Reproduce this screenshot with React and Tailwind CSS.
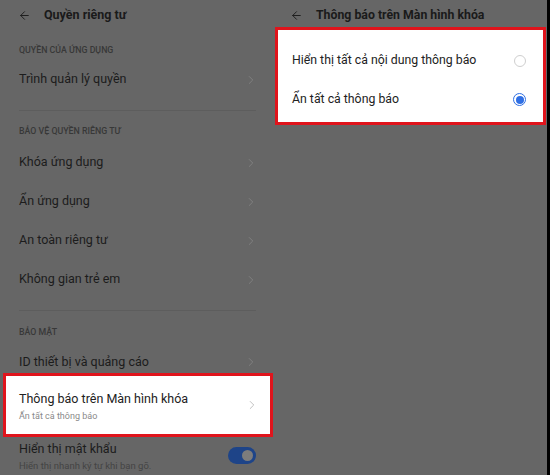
import { ArrowLeft, ChevronRight } from 'lucide-react';

// Màn hình cài đặt quyền riêng tư (ảnh chụp bị làm tối, chỉ vùng đánh dấu giữ màu trắng)

const font = { fontFamily: 'Roboto, "Noto Sans", sans-serif' };

const SectionLabel = ({ children, pt }) => (
    <div className={`${pt} pl-[19px] text-[8.8px] leading-[10px] font-medium text-[#383838]`}>
        {children}
    </div>
);

const DimRow = ({ children }) => (
    <div className="h-[39px] flex items-center justify-between pl-[19px] pr-[15px]">
        <span className="text-[12.5px] text-[#1c1c1c]">{children}</span>
        <ChevronRight className="w-[14px] h-[14px] text-[#828282]" strokeWidth={1.5} />
    </div>
);

const Divider = ({ mt }) => <div className={`${mt} ml-[19px] mr-[17px] h-px bg-[#5d5d5d]`} />;

const LeftPanel = () => (
    <div className="w-[273px] shrink-0">
        <div className="h-[30px] flex items-center pl-[18px] gap-[13px]">
            <ArrowLeft className="w-[13px] h-[13px] text-[#1c1c1c]" strokeWidth={1.75} />
            <span className="text-[12.5px] font-bold text-[#1a1a1a]">Quyền riêng tư</span>
        </div>

        <SectionLabel pt="pt-[15px]">QUYỀN CỦA ỨNG DỤNG</SectionLabel>
        <div className="mt-[5px]">
            <DimRow>Trình quản lý quyền</DimRow>
        </div>
        <Divider mt="mt-[11px]" />

        <SectionLabel pt="pt-[15px]">BẢO VỆ QUYỀN RIÊNG TƯ</SectionLabel>
        <div className="mt-[7px]">
            <DimRow>Khóa ứng dụng</DimRow>
            <DimRow>Ẩn ứng dụng</DimRow>
            <DimRow>An toàn riêng tư</DimRow>
            <DimRow>Không gian trẻ em</DimRow>
        </div>
        <Divider mt="mt-[11px]" />

        <SectionLabel pt="pt-[16px]">BẢO MẬT</SectionLabel>
        <div className="pt-[14px] h-[36px] flex items-center justify-between pl-[19px] pr-[15px]">
            <span className="text-[12.5px] leading-[18px] text-[#1c1c1c]">ID thiết bị và quảng cáo</span>
            <ChevronRight className="w-[14px] h-[14px] text-[#828282]" strokeWidth={1.5} />
        </div>

        {/* Vùng được đánh dấu */}
        <div className="ml-[3px] h-[64px] bg-white border-[3px] border-[#e0141c] flex items-center justify-between pl-[13px] pr-[11px]">
            <div className="pt-[2px]">
                <div className="text-[12.5px] leading-[18px] text-[#222]">Thông báo trên Màn hình khóa</div>
                <div className="text-[9px] leading-[12px] mt-[2px] text-[#8a8a8a]">Ẩn tất cả thông báo</div>
            </div>
            <ChevronRight className="w-[14px] h-[14px] text-[#b8b8b8]" strokeWidth={1.5} />
        </div>

        <div className="pt-[3px] flex items-center justify-between pl-[19px] pr-[17px]">
            <div>
                <div className="text-[12.5px] leading-[18px] text-[#1c1c1c]">Hiển thị mật khẩu</div>
                <div className="text-[9.5px] leading-[12px] mt-[2px] text-[#444]">Hiển thị nhanh ký tự khi bạn gõ.</div>
            </div>
            <div className="w-[28px] h-[17px] rounded-full bg-[#1e4488] flex items-center justify-end pr-[3px] -mt-[2px]">
                <div className="w-[11px] h-[11px] rounded-full bg-[#7c7c7c]" />
            </div>
        </div>
    </div>
);

const Radio = ({ checked }) =>
    checked ? (
        <div className="w-[13px] h-[13px] rounded-full border-[1.5px] border-[#2f6fe4] flex items-center justify-center">
            <div className="w-[8px] h-[8px] rounded-full bg-[#2f6fe4]" />
        </div>
    ) : (
        <div className="w-[12px] h-[12px] rounded-full border border-[#cfcfcf]" />
    );

const RightPanel = () => (
    <div className="flex-1">
        <div className="h-[27px] flex items-center pl-[17px] gap-[13px] pt-[3px]">
            <ArrowLeft className="w-[13px] h-[13px] text-[#1c1c1c]" strokeWidth={1.75} />
            <span className="text-[12.3px] font-bold text-[#1a1a1a]">Thông báo trên Màn hình khóa</span>
        </div>
        <div className="ml-[2px] mr-[1px] h-[98px] bg-white border-[3px] border-[#e0141c] pt-[11px]">
            <div className="h-[39px] flex items-center justify-between pl-[14px] pr-[17px]">
                <span className="text-[12.3px] text-[#222]">Hiển thị tất cả nội dung thông báo</span>
                <Radio />
            </div>
            <div className="h-[39px] flex items-center justify-between pl-[14px] pr-[17px]">
                <span className="text-[12.3px] text-[#222]">Ẩn tất cả thông báo</span>
                <Radio checked />
            </div>
        </div>
    </div>
);

const App = () => (
    <div className="w-[550px] h-[475px] overflow-hidden bg-[#666666] flex" style={font}>
        <LeftPanel />
        <RightPanel />
        <div className="w-[3px] shrink-0 bg-black" />
    </div>
);

export default App;
